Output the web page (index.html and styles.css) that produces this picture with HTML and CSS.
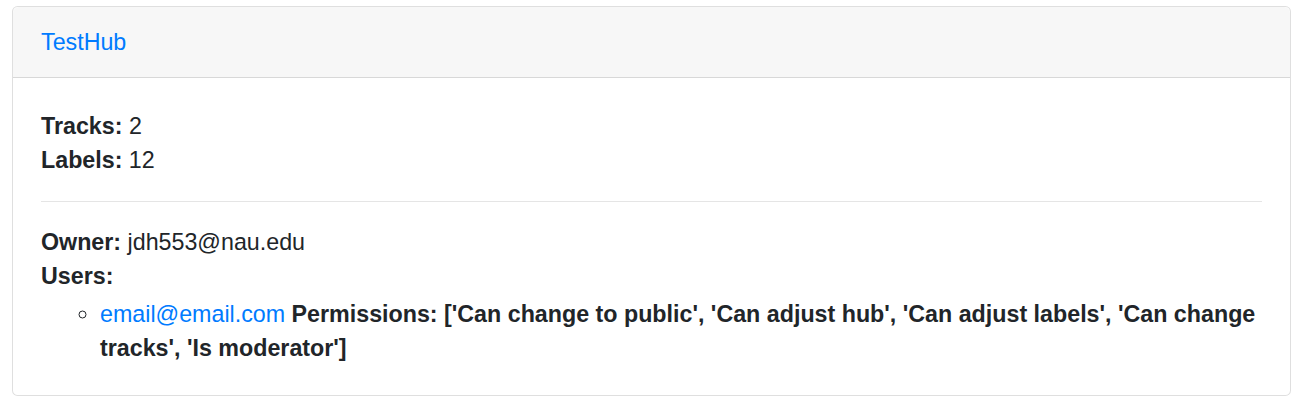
FILE: index.html
```html
<!DOCTYPE html>
<html>
<head>
<meta charset="utf-8">
<link rel="stylesheet" href="styles.css">
</head>
<body>
<div class="page">
  <div class="card">
    <div class="card-header"><a class="link" href="#">TestHub</a></div>
    <div class="card-body">
      <div class="stats">
        <div><b>Tracks:</b> 2</div>
        <div><b>Labels:</b> 12</div>
      </div>
      <hr class="rule">
      <div class="people">
        <div><b>Owner:</b> jdh553@nau.edu</div>
        <div><b>Users:</b></div>
        <ul class="users">
          <li><a class="link" href="#">email@email.com</a> <b>Permissions: ['Can change to public', 'Can adjust hub', 'Can adjust labels', 'Can change tracks', 'Is moderator']</b></li>
        </ul>
      </div>
    </div>
  </div>
</div>
</body>
</html>
```

FILE: styles.css
```css
html, body {
  margin: 0;
  padding: 0;
  background: #fff;
}
.page {
  padding: 6px 11px 0 12px;
  font-family: "Liberation Sans", Arial, sans-serif;
  font-size: 23.25px;
  line-height: 34.5px;
  color: #212529;
}
.card {
  border: 1px solid rgba(0,0,0,0.125);
  border-radius: 5.6px;
  background: #fff;
}
.card-header {
  padding: 17.75px 28px;
  background: rgba(0,0,0,0.03);
  border-bottom: 1px solid rgba(0,0,0,0.125);
  border-radius: 5.6px 5.6px 0 0;
}
.link {
  color: #007bff;
  text-decoration: none;
}
.card-body {
  padding: 30.5px 28px 29px;
}
.stats b, .people b {
  font-weight: bold;
}
.rule {
  border: 0;
  border-top: 1px solid rgba(0,0,0,0.1);
  margin: 23px 0 23px;
}
.users {
  margin: 3px 0 0;
  padding-left: 59px;
  list-style-type: circle;
}
```
